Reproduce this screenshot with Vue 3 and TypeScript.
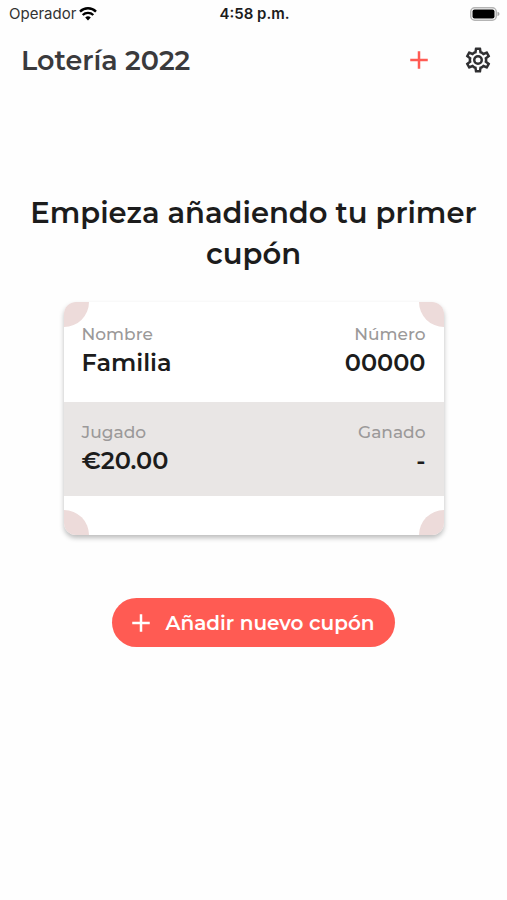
<script setup lang="ts">
interface Field {
  label: string
  value: string
}

const rows: Field[][] = [
  [
    { label: 'Nombre', value: 'Familia' },
    { label: 'Número', value: '00000' },
  ],
  [
    { label: 'Jugado', value: '€20.00' },
    { label: 'Ganado', value: '-' },
  ],
]

const plusPath = 'M19 13H13V19H11V13H5V11H11V5H13V11H19V13Z'
const cogPath =
  'M12,8A4,4 0 0,1 16,12A4,4 0 0,1 12,16A4,4 0 0,1 8,12A4,4 0 0,1 12,8M12,10A2,2 0 0,0 10,12A2,2 0 0,0 12,14A2,2 0 0,0 14,12A2,2 0 0,0 12,10M10,22C9.75,22 9.54,21.82 9.5,21.58L9.13,18.93C8.5,18.68 7.96,18.34 7.44,17.94L4.95,18.95C4.73,19.03 4.46,18.95 4.34,18.73L2.34,15.27C2.21,15.05 2.27,14.78 2.46,14.63L4.57,12.97L4.5,12L4.57,11L2.46,9.37C2.27,9.22 2.21,8.95 2.34,8.73L4.34,5.27C4.46,5.05 4.73,4.96 4.95,5.05L7.44,6.05C7.96,5.66 8.5,5.32 9.13,5.07L9.5,2.42C9.54,2.18 9.75,2 10,2H14C14.25,2 14.46,2.18 14.5,2.42L14.87,5.07C15.5,5.32 16.04,5.66 16.56,6.05L19.05,5.05C19.27,4.96 19.54,5.05 19.66,5.27L21.66,8.73C21.79,8.95 21.73,9.22 21.54,9.37L19.43,11L19.5,12L19.43,13L21.54,14.63C21.73,14.78 21.79,15.05 21.66,15.27L19.66,18.73C19.54,18.95 19.27,19.04 19.05,18.95L16.56,17.95C16.04,18.34 15.5,18.68 14.87,18.93L14.5,21.58C14.46,21.82 14.25,22 14,22H10M11.25,4L10.88,6.61C9.68,6.86 8.62,7.5 7.85,8.39L5.44,7.35L4.69,8.65L6.8,10.2C6.4,11.37 6.4,12.64 6.8,13.8L4.68,15.36L5.43,16.66L7.86,15.62C8.63,16.5 9.68,17.14 10.87,17.38L11.24,20H12.76L13.13,17.39C14.32,17.14 15.37,16.5 16.14,15.62L18.57,16.66L19.32,15.36L17.2,13.81C17.6,12.64 17.6,11.37 17.2,10.2L19.31,8.65L18.56,7.35L16.15,8.39C15.38,7.5 14.32,6.86 13.12,6.62L12.75,4H11.25Z'
</script>

<template>
  <div class="screen">
    <div class="status">
      <div class="carrier">
        <span>Operador</span>
        <svg class="wifi" viewBox="0 0 18 14" aria-hidden="true">
          <path d="M1 4.6A11.4 11.4 0 0 1 17 4.6" />
          <path d="M3.7 8A7.6 7.6 0 0 1 14.3 8" />
          <path class="dot" d="M9 13.4L6.2 10.5A4 4 0 0 1 11.8 10.5Z" />
        </svg>
      </div>
      <span class="time">4:58 p.m.</span>
      <svg class="battery" viewBox="0 0 30 14" aria-hidden="true">
        <rect x="0.75" y="0.75" width="25.5" height="12.5" rx="4" fill="#fff" stroke="#b4b4b4" stroke-width="1.5" />
        <rect x="2.5" y="2.5" width="22" height="9" rx="2" fill="#000" />
        <path d="M27.5 4.8Q29.5 5.4 29.5 7T27.5 9.2Z" fill="#a6a6a6" />
      </svg>
    </div>

    <header class="bar">
      <h1>Lotería 2022</h1>
      <div class="actions">
        <button type="button" class="icon-button accent" aria-label="Añadir">
          <svg viewBox="0 0 24 24"><path :d="plusPath" /></svg>
        </button>
        <button type="button" class="icon-button" aria-label="Ajustes">
          <svg viewBox="0 0 24 24"><path :d="cogPath" /></svg>
        </button>
      </div>
    </header>

    <main class="content">
      <h2>Empieza añadiendo tu primer cupón</h2>

      <section class="card">
        <span class="corner top left"></span>
        <span class="corner top right"></span>
        <span class="corner bottom left"></span>
        <span class="corner bottom right"></span>
        <dl v-for="(row, i) in rows" :key="i" class="row">
          <div v-for="field in row" :key="field.label" class="field">
            <dt>{{ field.label }}</dt>
            <dd>{{ field.value }}</dd>
          </div>
        </dl>
        <div class="foot"></div>
      </section>

      <button type="button" class="add">
        <svg viewBox="0 0 24 24" aria-hidden="true"><path :d="plusPath" /></svg>
        <span>Añadir nuevo cupón</span>
      </button>
    </main>
  </div>
</template>

<style>
body {
  margin: 0;
  background: #fefefe;
}
</style>

<style scoped>
.screen {
  min-height: 100vh;
  box-sizing: border-box;
  background: #fefefe;
  color: #1c1c1c;
  font-family: Montserrat, Inter, sans-serif;
}

.status {
  display: grid;
  grid-template-columns: 1fr auto 1fr;
  align-items: center;
  height: 27px;
  padding: 0 7px 0 9px;
  font-family: Inter, sans-serif;
  font-size: 15px;
}

.carrier {
  display: flex;
  align-items: center;
  gap: 3px;
  color: #333;
}

.wifi {
  width: 18px;
  height: 14px;
  fill: none;
  stroke: #000;
  stroke-width: 2.4;
}

.wifi .dot {
  fill: #000;
  stroke: none;
}

.time {
  font-weight: 600;
}

.battery {
  justify-self: end;
  width: 30px;
  height: 14px;
}

.bar {
  display: flex;
  align-items: center;
  justify-content: space-between;
  height: 66px;
  padding: 0 14px 0 21px;
}

h1 {
  margin: 0;
  color: #3a3a3c;
  font-size: 27px;
  font-weight: 600;
}

.actions {
  display: flex;
  gap: 29px;
}

button {
  border: 0;
  font-family: inherit;
  cursor: pointer;
}

.icon-button {
  display: flex;
  padding: 0;
  background: none;
  color: #303032;
}

.accent {
  color: #ff5b53;
}

button svg {
  display: block;
  width: 30px;
  height: 30px;
  fill: currentColor;
}

.content {
  display: flex;
  flex-direction: column;
  align-items: center;
  padding: 99px 24px 24px;
}

h2 {
  margin: 0;
  font-size: 29px;
  font-weight: 600;
  line-height: 41px;
  text-align: center;
}

.card {
  position: relative;
  width: 100%;
  max-width: 380px;
  margin: 28px 0 63px;
  overflow: hidden;
  border-radius: 12px;
  background: #fff;
  box-shadow: 0 3px 5px rgba(0, 0, 0, 0.26);
}

.corner {
  position: absolute;
  width: 50px;
  height: 50px;
  border-radius: 50%;
  background: #eddbda;
}

.top {
  top: -25px;
}

.bottom {
  bottom: -25px;
}

.left {
  left: -25px;
}

.right {
  right: -25px;
}

.row {
  display: flex;
  justify-content: space-between;
  margin: 0;
  padding: 20px 18px 22px;
}

.row:nth-of-type(2) {
  padding-top: 18px;
  padding-bottom: 18px;
  background: #e9e6e5;
}

.field:last-child {
  text-align: right;
}

dt {
  color: #9b9999;
  font-size: 17px;
  font-weight: 500;
  line-height: 24px;
}

dd {
  margin: 0;
  font-size: 24px;
  font-weight: 600;
  line-height: 34px;
}

.foot {
  height: 39px;
}

.add {
  display: flex;
  align-items: center;
  gap: 9px;
  height: 49px;
  padding: 0 20px 0 14px;
  border-radius: 25px;
  background: #ff5b53;
  color: #fff;
  font-size: 20px;
  font-weight: 600;
}
</style>
